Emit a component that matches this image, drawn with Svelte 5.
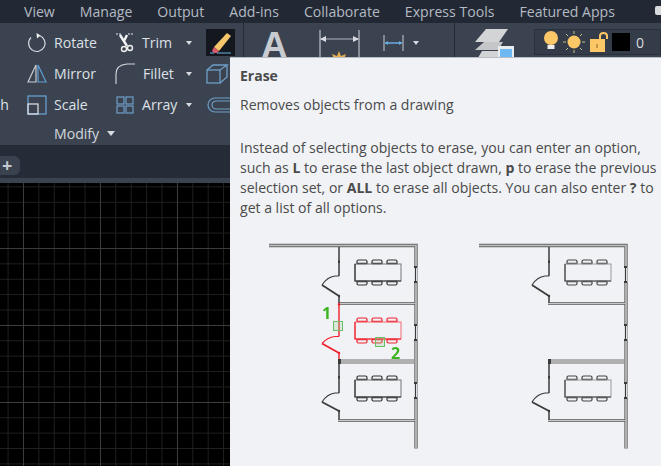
<script>
  const menu = ['View', 'Manage', 'Output', 'Add-ins', 'Collaborate', 'Express Tools', 'Featured Apps'];
  const chairs = [97, 112, 127];
  const black = '#3a3a3a';
  const red = '#f0202c';
  const ticksRight = [32, 47, 90, 105, 148, 163];
</script>

{#snippet table(dy, color, edge)}
  <g transform="translate(0 {dy})" fill="none" stroke={color}>
    {#each chairs as x}
      <path d="M{x} 29v-2.500q0-1.500 1.500-1.500h7q1.500 0 1.500 1.500v2.500" stroke-width="1.200" />
      <path d="M{x} 46v2.500q0 1.500 1.500 1.500h7q1.500 0 1.500-1.500v-2.500" stroke-width="1.200" />
      <path d="M{x} 28.500h10M{x} 46.500h10" stroke-width="1.400" />
    {/each}
    <rect x="95" y="29" width="46" height="17" stroke={edge} stroke-width="1" />
    <path d="M95 29v17h46" stroke-width="1.200" />
  </g>
{/snippet}

{#snippet door(y, color, tip = 9, end = 20)}
  <g fill="none" stroke={color}>
    <path d="M79 {y}h-4q-8 1-13 {tip}" stroke-width="1.200" />
    <path d="M62 {y + tip}L79 {y + end}" stroke-width="1.800" />
    <circle cx="79" cy={y + end} r="1.200" fill={color} stroke="none" />
  </g>
{/snippet}

{#snippet shell()}
  <path d="M9 10.500h147v203" fill="none" stroke="#666" stroke-width="3.400" />
  <path d="M9 10.500h147v203" fill="none" stroke="#bdbdbd" stroke-width="1.700" />
  <path d="M155.500 32v15M155.500 90v15M155.500 148v15" fill="none" stroke="#f0f2f6" stroke-width="3.600" />
  <path d="M155.500 32v15M155.500 90v15M155.500 148v15" fill="none" stroke={black} stroke-width="1.200" />
  {#each ticksRight as y}
    <rect x="154" y={y - 1} width="3" height="2" fill={black} />
  {/each}
  <path d="M79 12v29" stroke={black} stroke-width="1.500" />
  <rect x="78" y="25.500" width="2" height="2.500" fill={black} />
  {@render door(41, black)}
  <path d="M79 61v7" stroke={black} stroke-width="1.500" />
  <path d="M78 68.500h77" stroke="#555" stroke-width="2.600" />
  <path d="M78 68.500h77" stroke="#c8c8c8" stroke-width="1" />
  <path d="M79 128v30" stroke={black} stroke-width="1.500" />
  <rect x="79" y="124" width="75" height="5" fill="#b0b0b0" />
  <rect x="78" y="124" width="3" height="5" fill={black} />
  <rect x="78" y="141" width="2" height="2.500" fill={black} />
  {@render door(158, black, 9, 18)}
  <path d="M79 176v9" stroke={black} stroke-width="1.500" />
  <path d="M78 185.500h77" stroke="#555" stroke-width="2.600" />
  <path d="M78 185.500h77" stroke="#c8c8c8" stroke-width="1" />
{/snippet}

<div class="app">
  <nav class="menu">
    {#each menu as item}<span>{item}</span>{/each}
    <i class="search"></i>
  </nav>

  <section class="ribbon">
    <div class="modify">
      <div class="tools">
        <div class="stub"></div>
        <div class="tool a">
          <svg width="20" height="20" viewBox="0 0 20 20" fill="none" stroke="#d6dadf" stroke-width="1.200"><path d="M12.500 2.500A8.200 8.200 0 1 1 4 4.500" /><path d="M9.500 0l4 2.500-3.500 3z" fill="#eef0f2" stroke="none" /></svg>
          <span>Rotate</span>
        </div>
        <div class="tool b">
          <svg width="20" height="20" viewBox="0 0 20 20" fill="none"><path d="M1 1h5M13 1h6" stroke="#aeb3ba" stroke-width="1.300" stroke-dasharray="2 1" /><path d="M5 2l7 11M12 2L9 8" stroke="#f2f3f4" stroke-width="2.400" /><circle cx="9" cy="16" r="2.500" stroke="#eee" stroke-width="1.400" /><circle cx="15" cy="15" r="2.500" stroke="#eee" stroke-width="1.400" /></svg>
          <span>Trim</span><b class="caret"></b>
        </div>
        <div class="tool c erase">
          <svg width="29" height="27" viewBox="0 0 29 27" fill="none"><path d="M8 18L21 4l4 3-12 15z" fill="#f6c66a" /><path d="M8 18l5 4-2 2H8l-2-2z" fill="#d95a68" /><path d="M4 24h4M11 24h14" stroke="#6ab3e8" stroke-width="1" /></svg>
        </div>

        <div class="stub"></div>
        <div class="tool a">
          <svg width="20" height="20" viewBox="0 0 20 20" fill="none" stroke-width="1.200"><path d="M9 1L1 18h8z" stroke="#c8ccd2" /><path d="M11 1l8 17h-8z" stroke="#5f9fcf" /></svg>
          <span>Mirror</span>
        </div>
        <div class="tool b">
          <svg width="20" height="22" viewBox="0 0 20 22" fill="none"><path d="M1 21V11Q1 2 12 1h8" stroke="#d6dadf" stroke-width="1.100" /></svg>
          <span class="fillet">Fillet</span><b class="caret"></b>
        </div>
        <div class="tool c">
          <svg width="24" height="22" viewBox="0 0 24 22" fill="none" stroke="#6e9fc7" stroke-width="1.300"><rect x="1" y="7" width="13" height="13" /><path d="M1 7l6-5h14l-7 5M14 20l7-6V2" /></svg>
        </div>

        <div class="stub"><span>Stretch</span></div>
        <div class="tool a">
          <svg width="20" height="20" viewBox="0 0 20 20" fill="none" stroke-width="1.200"><rect x="1" y="1" width="18" height="18" stroke="#6ba5d6" /><rect x="1" y="9" width="10" height="10" stroke="#e4e6ea" /></svg>
          <span>Scale</span>
        </div>
        <div class="tool b">
          <svg width="20" height="20" viewBox="0 0 20 20" fill="none" stroke="#6e9fc7" stroke-width="1.200"><rect x="2" y="2" width="7" height="7" /><rect x="11" y="2" width="7" height="7" /><rect x="2" y="11" width="7" height="7" /><rect x="11" y="11" width="7" height="7" /></svg>
          <span>Array</span><b class="caret"></b>
        </div>
        <div class="tool c">
          <svg width="24" height="18" viewBox="0 0 24 18" fill="none" stroke="#6e9fc7" stroke-width="1.200"><path d="M24 2H9a7 7 0 0 0 0 14h15M24 5H10a4 4 0 0 0 0 8h14" /></svg>
        </div>
      </div>
      <div class="title">Modify<b class="caret big"></b></div>
    </div>

    <div class="annotate">
      <span class="big-a">A</span>
      <svg class="dim" width="42" height="34" viewBox="0 0 42 34" fill="none"><path d="M1 0v34M40 0v34" stroke="#d8dbdf" stroke-width="1" /><path d="M1 9h39" stroke="#aeb3ba" /><path d="M1 9l6-3v6zM40 9l-6-3v6z" fill="#d8dbdf" /><path d="M20 21l2 5 5-2-2 5 3 2H12l3-2-2-5 5 2z" fill="#e0b050" /></svg>
      <svg class="dim2" width="21" height="18" viewBox="0 0 21 18" fill="none"><path d="M1 1v16M20 1v16" stroke="#c8ccd2" /><path d="M2 9h17" stroke="#6ab3e8" stroke-width="1.400" /><path d="M2 9l3-2v4zM19 9l-3-2v4z" fill="#6ab3e8" /></svg>
      <b class="caret"></b>
    </div>

    <div class="layers">
      <svg width="40" height="34" viewBox="0 0 40 34"><path d="M12 0h22l-9 13H1z" fill="#d2d4d6" /><path d="M10 13h19l-5 8H1z" fill="#c4c6c8" /><path d="M8 22h17v12H1z" fill="#d2d4d6" /><rect x="24" y="17" width="16" height="17" fill="#e9ecef" /><rect x="26" y="20" width="12" height="12" fill="#6db7f2" /></svg>
      <div class="layer-box">
        <svg width="18" height="24" viewBox="0 0 18 24"><circle cx="9" cy="8" r="7" fill="#fcc766" /><path d="M5.500 15h7v4h-7z" fill="#eee" /></svg>
        <svg class="sun" width="22" height="22" viewBox="0 0 22 22"><circle cx="11" cy="11" r="6.500" fill="#fcc766" /><path d="M11 0v3M11 19v3M0 11h3M19 11h3M3 3l2 2M17 17l2 2M3 19l2-2M17 5l2-2" stroke="#c5c08a" stroke-width="1" /></svg>
        <svg class="lock" width="20" height="20" viewBox="0 0 20 20"><path d="M1 7h15v13H1z" fill="#fcc766" /><path d="M11 7V4q0-3 3.500-3T18 4v3" fill="none" stroke="#fcc766" stroke-width="2" /><path d="M8 12v4" stroke="#8a6a2a" /></svg>
        <i class="swatch"></i>
        <span>0</span>
      </div>
    </div>
  </section>

  <div class="tabs"><div class="tab">+</div></div>
  <div class="ruler"></div>
  <div class="canvas"></div>

  <aside class="tip">
    <h4>Erase</h4>
    <p class="short">Removes objects from a drawing</p>
    <p class="long">Instead of selecting objects to erase, you can enter an option,<br />such as <b>L</b> to erase the last object drawn, <b>p</b> to erase the previous<br />selection set, or <b>ALL</b> to erase all objects. You can also enter <b>?</b> to<br />get a list of all options.</p>
    <div class="plans">
      <svg class="plan" width="170" height="231" viewBox="0 0 170 231">
        {@render shell()}
        <path d="M79 68v33.500M79 118v6" stroke={red} stroke-width="1.400" />
        {@render door(101.500, red, 7, 16.500)}
        <circle cx="79" cy="69.500" r="1.200" fill={red} />
        {@render table(0, '#333', '#777')}
        {@render table(58, red, '#f56a74')}
        {@render table(116, '#333', '#777')}
        <rect x="73.500" y="86.500" width="9" height="9" fill="#8fd08a" fill-opacity=".25" stroke="#6cbf66" />
        <rect x="115.500" y="102.500" width="9" height="9" fill="#8fd08a" fill-opacity=".25" stroke="#6cbf66" />
        <text x="62" y="84" class="num">1</text>
        <text x="131" y="124" class="num">2</text>
      </svg>
      <svg class="plan" width="170" height="231" viewBox="0 0 170 231">
        {@render shell()}
        {@render table(0, '#444', '#999')}
        {@render table(116, '#444', '#999')}
      </svg>
    </div>
  </aside>
</div>

<style>
  :global(body) { margin: 0; }
  .app {
    position: relative;
    width: 661px;
    height: 466px;
    overflow: hidden;
    display: flex;
    flex-direction: column;
    background: #000;
    font-family: "Open Sans", "Noto Sans", sans-serif;
  }
  .menu {
    height: 23px;
    flex: none;
    display: flex;
    align-items: center;
    gap: 25px;
    padding-left: 24px;
    background: #222934;
    color: #b4bac3;
    font-size: 14.100px;
    white-space: nowrap;
  }
  .search {
    position: absolute;
    left: 655px;
    top: 6px;
    width: 12px;
    height: 9px;
    border-radius: 2px;
    background: #d8dadd;
  }
  .ribbon {
    height: 122px;
    flex: none;
    display: flex;
    background: #3b4351;
    color: #dde0e5;
    font-size: 14.100px;
  }
  .modify {
    width: 244px;
    flex: none;
    border-right: 1px solid #262c36;
    box-sizing: border-box;
    height: 34px;
    overflow: visible;
  }
  .tools {
    display: grid;
    grid-template-columns: 27px 88px 91px 38px;
    grid-auto-rows: 31px;
    padding-top: 4px;
  }
  .stub {
    display: flex;
    align-items: center;
    justify-content: flex-end;
    overflow: hidden;
    padding-right: 18px;
  }
  .stub span { flex: none; }
  .tool {
    display: flex;
    align-items: center;
    gap: 7px;
  }
  .tool.a svg, .tool.b svg { flex: none; }
  .tool.b { padding-right: 14px; }
  .fillet { margin-left: 1px; }
  .erase {
    justify-self: start;
    background: #14181e;
    width: 29px;
    height: 27px;
    align-self: center;
  }
  .caret {
    margin-left: auto;
    width: 0;
    height: 0;
    border-left: 3.500px solid transparent;
    border-right: 3.500px solid transparent;
    border-top: 4px solid #d8dbe0;
  }
  .title {
    display: flex;
    align-items: center;
    gap: 8px;
    padding: 0 0 0 54px;
    height: 26px;
    color: #d4d8dd;
  }
  .caret.big {
    margin-left: 0;
    border-left-width: 4.500px;
    border-right-width: 4.500px;
    border-top-width: 5px;
  }
  .annotate {
    width: 211px;
    height: 34px;
    flex: none;
    box-sizing: border-box;
    border-right: 1px solid #262c36;
    display: flex;
    align-items: flex-start;
    padding-left: 17px;
    overflow: visible;
  }
  .big-a {
    font-family: "Liberation Sans", sans-serif;
    font-weight: 700;
    font-size: 37px;
    line-height: 40px;
    color: #c8ccd1;
    margin-top: 3px;
    width: 27px;
    flex: none;
  }
  .dim { margin: 7px 0 0 31px; flex: none; }
  .dim2 { margin: 11px 0 0 22px; flex: none; }
  .annotate .caret { margin: 18px 0 0 9px; flex: none; }
  .layers {
    display: flex;
    align-items: flex-start;
    padding: 6px 0 0 19px;
    gap: 20px;
    height: 34px;
  }
  .layer-box {
    flex: none;
    width: 127px;
    height: 26px;
    box-sizing: border-box;
    border: 1px solid #2b313c;
    background: #353c49;
    display: flex;
    align-items: center;
    padding-left: 7px;
    color: #d8dbe0;
    position: relative;
  }
  .sun { margin-left: 3px; }
  .lock { margin-left: 4px; }
  .swatch {
    width: 18px;
    height: 18px;
    background: #000;
    margin-left: 3px;
  }
  .layer-box span { margin-left: 6px; font-size: 14px; }
  .tabs {
    height: 33px;
    flex: none;
    background: #252c38;
    padding-top: 11px;
    box-sizing: border-box;
  }
  .tab {
    width: 20px;
    height: 19px;
    background: #3a4250;
    border-radius: 0 6px 6px 0;
    color: #c4c8ce;
    font-size: 18px;
    font-weight: 700;
    line-height: 19px;
    text-indent: 2px;
  }
  .ruler { height: 5px; flex: none; background: #3c4350; }
  .canvas {
    flex: 1;
    background-color: #000;
    background-image:
      linear-gradient(90deg, #3c3c3c 1px, transparent 1px),
      linear-gradient(#3c3c3c 1px, transparent 1px),
      linear-gradient(90deg, #202020 1px, transparent 1px),
      linear-gradient(#202020 1px, transparent 1px);
    background-size: 77px 77px, 77px 77px, 15.400px 15.400px, 15.400px 15.400px;
    background-position: 23px 0, 0 65px, 7.600px 0, 0 3.400px;
  }
  .tip {
    position: absolute;
    left: 230px;
    top: 57px;
    right: 0;
    bottom: 0;
    background: #f0f2f6;
    border-top: 1px solid #b8bcc4;
    box-sizing: border-box;
    padding: 8px 0 0 10px;
    color: #4a4a4a;
    font-size: 14.050px;
    line-height: 20px;
    white-space: nowrap;
  }
  h4 { margin: 0; font-size: 14px; font-weight: 700; line-height: 20px; }
  p { margin: 0; }
  .short { margin-top: 9px; }
  .long { margin-top: 23px; }
  .plans {
    display: flex;
    gap: 40px;
    margin: 17px 0 0 20px;
  }
  .plan { flex: none; filter: blur(0.3px); }
  .num {
    font-family: "Open Sans", sans-serif;
    font-size: 16px;
    font-weight: 700;
    fill: #3cb521;
  }
</style>
